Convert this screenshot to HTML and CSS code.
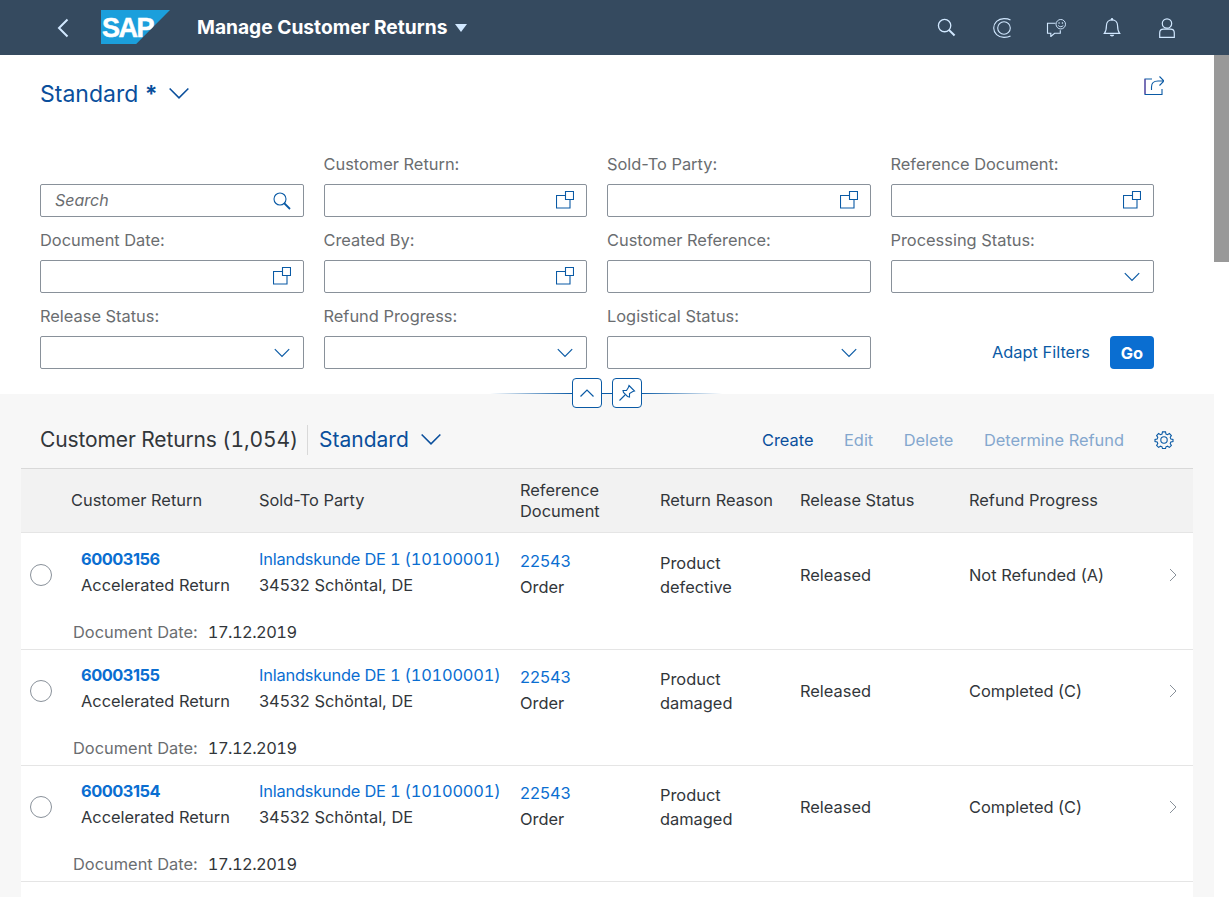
FILE: index.html
```html
<!DOCTYPE html>
<html lang="en">
<head>
<meta charset="utf-8">
<title>Manage Customer Returns</title>
<link rel="stylesheet" href="styles.css">
</head>
<body>
<svg class="defs" width="0" height="0">
  <symbol id="vh" viewBox="0 0 18 18"><path d="M9 4.500H.5V17H14V8.500M9.500 .5H17.500V8.500H9.500Z" fill="none" stroke="currentColor" stroke-width="1.100"/></symbol>
  <symbol id="chev" viewBox="0 0 16 10"><path d="M.8 1.200L8 8.400L15.200 1.200" fill="none" stroke="currentColor" stroke-width="1.200"/></symbol>
</svg>
<header class="shell">
  <svg class="back" width="12" height="20" viewBox="0 0 12 20"><path d="M10.500 1.500L2 10L10.500 18.500" fill="none" stroke="#d1e8ff" stroke-width="2"/></svg>
  <div class="logo"><span class="logo-text">SAP</span></div>
  <div class="app-title">Manage Customer Returns</div>
  <span class="title-caret"></span>
  <div class="shell-icons">
    <svg width="19" height="19" viewBox="0 0 20 20"><circle cx="8" cy="8" r="6.500" fill="none" stroke="#d1e8ff" stroke-width="1.400"/><path d="M12.500 12.500L18.500 18.500" stroke="#d1e8ff" stroke-width="2.200"/></svg>
    <svg width="18" height="20" viewBox="0 0 18 20"><path d="M17.500 2C15.800 1 14 .6 11 .6C5 .6 .7 4.800 .7 10C.7 15.200 5 19.400 11 19.400C14 19.400 15.800 19 17.500 18" fill="none" stroke="#d1e8ff" stroke-width="1.100"/><circle cx="11" cy="10" r="6.300" fill="none" stroke="#d1e8ff" stroke-width="1.100"/></svg>
    <svg width="21" height="18" viewBox="0 0 22 19"><path d="M10 4.500H1.500V15H5V18.500L9 15H15V12" fill="none" stroke="#d1e8ff" stroke-width="1.200"/><circle cx="15.500" cy="5.500" r="5" fill="#354a5f" stroke="#d1e8ff" stroke-width="1"/><circle cx="13.700" cy="4.200" r=".8" fill="#d1e8ff"/><circle cx="17.300" cy="4.200" r=".8" fill="#d1e8ff"/><path d="M12.800 6.800C14 8.600 17 8.600 18.200 6.800" fill="none" stroke="#d1e8ff"/></svg>
    <svg width="18" height="21" viewBox="0 0 20 22"><path d="M1.500 17.500C3.200 15.500 3.800 14 3.800 9C3.800 5 6.500 2.500 10 2.500C13.500 2.500 16.200 5 16.200 9C16.200 14 16.800 15.500 18.500 17.500Z" fill="none" stroke="#d1e8ff" stroke-width="1.300"/><circle cx="10" cy="1.800" r="1.300" fill="#d1e8ff"/><path d="M7.500 19H12.500C12 21.500 8 21.500 7.500 19Z" fill="#d1e8ff"/></svg>
    <svg width="16" height="20" viewBox="0 0 16 20"><circle cx="8" cy="5.500" r="4.700" fill="none" stroke="#d1e8ff" stroke-width="1.200"/><path d="M.7 19.400V15C.7 12.500 2 11.200 4.500 11.200H11.500C14 11.200 15.300 12.500 15.300 15V19.400H.7Z" fill="none" stroke="#d1e8ff" stroke-width="1.200"/></svg>
  </div>
</header>
<div class="page">
  <main class="content">
    <section class="filterbar">
      <div class="variant-row">
        <div class="variant-title">Standard <b class="star">*</b></div>
        <svg class="variant-chev"><use href="#chev"/></svg>
        <svg class="share" width="20" height="20" viewBox="0 0 20 20"><path d="M8 4H1V19.500H18V14" fill="none" stroke="#0a5aa5" stroke-width="1.100"/><path d="M1 4V19" stroke="#7a3fa0" stroke-width="1"/><path d="M7.500 15V12C7.500 8 10 6 14 6H19M15.500 1.500L20 6L15.500 10.500" fill="none" stroke="#0a5aa5" stroke-width="1.100"/></svg>
      </div>
      <div class="filter-grid">
        <div class="field"><div class="label"></div><div class="input"><i class="placeholder">Search</i><svg class="ico" width="18" height="18" viewBox="0 0 18 18"><circle cx="7" cy="7" r="6" fill="none" stroke="#0a5aa5" stroke-width="1.100"/><path d="M11 11L17 17" stroke="#0a5aa5" stroke-width="1.800"/></svg></div></div>
        <div class="field"><div class="label">Customer Return:</div><div class="input"><svg class="ico vh"><use href="#vh"/></svg></div></div>
        <div class="field"><div class="label">Sold-To Party:</div><div class="input"><svg class="ico vh"><use href="#vh"/></svg></div></div>
        <div class="field"><div class="label">Reference Document:</div><div class="input"><svg class="ico vh"><use href="#vh"/></svg></div></div>
        <div class="field"><div class="label">Document Date:</div><div class="input"><svg class="ico vh"><use href="#vh"/></svg></div></div>
        <div class="field"><div class="label">Created By:</div><div class="input"><svg class="ico vh"><use href="#vh"/></svg></div></div>
        <div class="field"><div class="label">Customer Reference:</div><div class="input"></div></div>
        <div class="field"><div class="label">Processing Status:</div><div class="input"><svg class="ico dd"><use href="#chev"/></svg></div></div>
        <div class="field"><div class="label">Release Status:</div><div class="input"><svg class="ico dd"><use href="#chev"/></svg></div></div>
        <div class="field"><div class="label">Refund Progress:</div><div class="input"><svg class="ico dd"><use href="#chev"/></svg></div></div>
        <div class="field"><div class="label">Logistical Status:</div><div class="input"><svg class="ico dd"><use href="#chev"/></svg></div></div>
        <div class="actions"><span class="adapt">Adapt Filters</span><span class="go">Go</span></div>
      </div>
      <div class="collapse-bar">
        <span class="hline hline-l"></span>
        <span class="mini"><svg width="16" height="10" viewBox="0 0 16 10"><path d="M1.500 8.500L8 2L14.500 8.500" fill="none" stroke="#0a5aa5" stroke-width="1.200"/></svg></span>
        <span class="hline hline-m"></span>
        <span class="mini"><svg width="18" height="18" viewBox="0 0 18 18"><path d="M11 1.500L16.500 7L14.800 7.500L11.500 9.500L11.500 13L9.500 12.500L5.500 8.500L5 6.500L8.500 6.500L10.500 3.200Z M7 11L1.500 16.500" fill="none" stroke="#0a5aa5" stroke-width="1.100"/></svg></span>
        <span class="hline hline-r"></span>
      </div>
    </section>
    <section class="results">
      <div class="toolbar">
        <div class="count">Customer Returns (1,054)</div>
        <div class="sep"></div>
        <div class="tvariant">Standard</div>
        <svg class="tchev"><use href="#chev"/></svg>
        <div class="tactions">
          <span class="act">Create</span>
          <span class="act off">Edit</span>
          <span class="act off">Delete</span>
          <span class="act off">Determine Refund</span>
          <svg class="gear" width="20" height="20" viewBox="0 0 20 20"><circle cx="10" cy="10" r="3.200" fill="none" stroke="#0a5aa5" stroke-width="1.100"/><path d="M8.300 1H11.700L12.200 3.400L13.900 4.100L16 2.800L18.200 5L16.900 7.100L17.600 8.800L20 9.300V11.700L17.600 12.200L16.900 13.900L18.200 16L16 18.200L13.900 16.900L12.200 17.600L11.700 19.500H8.300L7.800 17.600L6.100 16.900L4 18.200L1.800 16L3.100 13.900L2.400 12.200L0 11.700V9.300L2.400 8.800L3.100 7.100L1.800 5L4 2.800L6.100 4.100L7.800 3.400Z" transform="translate(1 1) scale(.9)" fill="none" stroke="#0a5aa5" stroke-width="1.200"/></svg>
        </div>
      </div>
      <div class="table">
        <div class="thead">
          <div></div>
          <div>Customer Return</div>
          <div>Sold-To Party</div>
          <div class="h2">Reference<br>Document</div>
          <div>Return Reason</div>
          <div>Release Status</div>
          <div>Refund Progress</div>
        </div>
        <div class="rows">
        <div class="row">
          <div class="cells">
            <span class="radio"></span>
            <div class="c-id"><a class="id">60003156</a><span>Accelerated Return</span></div>
            <div class="c-party"><a class="link party">Inlandskunde DE 1 (10100001)</a><span>34532 Schöntal, DE</span></div>
            <div class="c-ref"><a class="link">22543</a><span>Order</span></div>
            <div class="c-reason">Product<br>defective</div>
            <div>Released</div>
            <div>Not Refunded (A)</div>
            <svg class="nav" width="8" height="14" viewBox="0 0 8 14"><path d="M1 1L7 7L1 13" fill="none" stroke="#89919a" stroke-width="1"/></svg>
          </div>
          <div class="popin"><span class="pl">Document Date:</span><span class="date">17.12.2019</span></div>
        </div>
        <div class="row">
          <div class="cells">
            <span class="radio"></span>
            <div class="c-id"><a class="id">60003155</a><span>Accelerated Return</span></div>
            <div class="c-party"><a class="link party">Inlandskunde DE 1 (10100001)</a><span>34532 Schöntal, DE</span></div>
            <div class="c-ref"><a class="link">22543</a><span>Order</span></div>
            <div class="c-reason">Product<br>damaged</div>
            <div>Released</div>
            <div>Completed (C)</div>
            <svg class="nav" width="8" height="14" viewBox="0 0 8 14"><path d="M1 1L7 7L1 13" fill="none" stroke="#89919a" stroke-width="1"/></svg>
          </div>
          <div class="popin"><span class="pl">Document Date:</span><span class="date">17.12.2019</span></div>
        </div>
        <div class="row">
          <div class="cells">
            <span class="radio"></span>
            <div class="c-id"><a class="id">60003154</a><span>Accelerated Return</span></div>
            <div class="c-party"><a class="link party">Inlandskunde DE 1 (10100001)</a><span>34532 Schöntal, DE</span></div>
            <div class="c-ref"><a class="link">22543</a><span>Order</span></div>
            <div class="c-reason">Product<br>damaged</div>
            <div>Released</div>
            <div>Completed (C)</div>
            <svg class="nav" width="8" height="14" viewBox="0 0 8 14"><path d="M1 1L7 7L1 13" fill="none" stroke="#89919a" stroke-width="1"/></svg>
          </div>
          <div class="popin"><span class="pl">Document Date:</span><span class="date">17.12.2019</span></div>
        </div>
        </div>
        <div class="row-empty"></div>
      </div>
    </section>
  </main>
  <div class="scrollbar"><div class="thumb"></div></div>
</div>
</body>
</html>
```
FILE: styles.css
```css
* { box-sizing: border-box; }
html, body { margin: 0; height: 100%; overflow: hidden; }
body { font-family: "Inter", "Liberation Sans", sans-serif; font-size: 16.4px; color: #32363a; background: #fff; }
.defs { display: block; height: 0; }
a { text-decoration: none; }

.shell { height: 55px; background: #354a5f; display: flex; align-items: center; padding-left: 57px; color: #fff; }
.back { margin-right: 32px; }
.logo { width: 69px; height: 34px; margin-top: -1px; background: #1b9fdc; clip-path: polygon(0 0, 100% 0, 51% 100%, 0 100%); display: flex; align-items: center; }
.logo-text { font: 700 27px/34px "Liberation Sans", sans-serif; color: #fff; letter-spacing: -1.500px; margin-left: 1px; margin-top: 2px; -webkit-text-stroke: .5px #fff; }
.app-title { margin-left: 27px; padding-bottom: 1px; font-weight: 700; font-size: 19.200px; color: #fff; white-space: nowrap; }
.title-caret { margin-left: 8px; width: 0; height: 0; border-left: 6.500px solid transparent; border-right: 6.500px solid transparent; border-top: 8px solid #d1e8ff; }
.shell-icons { margin-left: auto; margin-right: 35px; display: grid; grid-auto-flow: column; grid-auto-columns: 55px; justify-items: center; align-items: center; }

.page { display: flex; height: calc(100% - 55px); }
.content { flex: 1; min-width: 0; }
.scrollbar { width: 15px; background: #fff; }
.thumb { height: 207px; background: #999; }

.filterbar { position: relative; height: 339px; padding: 0 60px 0 40px; background: #fff; }
.variant-row { display: flex; align-items: center; height: 86px; padding-bottom: 9px; position: relative; }
.variant-title { font-size: 23px; color: #0a4f9c; line-height: 77px; white-space: pre; margin-top: 2px; }
.star { font-weight: 700; }
.variant-chev { width: 22px; height: 13px; margin-left: 10px; color: #0a4f9c; }
.share { position: absolute; right: -10px; top: 20px; }
.filter-grid { display: grid; grid-template-columns: repeat(4, 1fr); column-gap: 20px; }
.field { height: 76px; padding-top: 12px; }
.label { height: 31px; line-height: 22px; color: #6a6d70; }
.input { height: 33px; border: 1px solid #89919a; border-radius: 2px; display: flex; align-items: center; justify-content: flex-end; padding: 0 12px 0 14px; background: #fff; }
.placeholder { margin-right: auto; color: #6a6d70; font-size: 16px; padding-bottom: 2px; }
.ico { flex: none; color: #0a5aa5; }
.ico.vh { width: 18px; height: 18px; margin-top: -1px; }
.ico.dd { width: 16px; height: 10px; margin-right: 1px; }
.actions { display: flex; align-items: flex-end; justify-content: flex-end; gap: 20px; height: 76px; }
.adapt { color: #0a5aa5; line-height: 33px; }
.go { width: 44px; height: 33px; border-radius: 4px; background: #0a6ed1; color: #fff; font-weight: 700; display: flex; align-items: center; justify-content: center; }

.collapse-bar { position: absolute; left: 490px; top: 323px; display: flex; align-items: center; width: 240px; height: 30px; }
.mini { width: 30px; height: 30px; border: 1px solid #0a5aa5; border-radius: 4px; background: #fff; display: flex; align-items: center; justify-content: center; flex: none; }
.hline { height: 1px; }
.hline-l { width: 82px; background: linear-gradient(to right, transparent, #0a5aa5); }
.hline-m { width: 10px; background: #0a5aa5; }
.hline-r { width: 80px; background: linear-gradient(to right, #0a5aa5, transparent); }

.results { height: 503px; background: #f7f7f7; padding-left: 21px; padding-right: 21px; }
.toolbar { height: 74px; display: flex; align-items: center; margin-left: 19px; padding-top: 17px; padding-right: 19px; }
.count { font-size: 21px; font-variant-numeric: tabular-nums; letter-spacing: -.12px; color: #32363a; white-space: nowrap; }
.sep { width: 1px; height: 30px; background: #d9d9d9; margin: 0 11px 0 9px; }
.tvariant { font-size: 21px; color: #0a4f9c; }
.tchev { width: 22px; height: 13px; margin-left: 11px; color: #0a4f9c; }
.tactions { margin-left: auto; display: flex; align-items: center; gap: 30.500px; }
.act { color: #0a4f9c; }
.act.off { color: #84a7ce; }
.gear { margin-left: -.5px; }

.table { background: #fff; border-top: 1px solid #d9d9d9; }
.thead, .cells { display: grid; grid-template-columns: 50px 188px 261px 140px 140px 169px 1fr; align-items: center; }
.thead { height: 64px; background: #f2f2f2; border-bottom: 1px solid #e5e5e5; color: #32363a; padding-bottom: 2px; }
.h2 { line-height: 21px; margin-top: 2px; }
.rows { padding-top: 1px; }
.row { height: 116px; border-bottom: 1px solid #e5e5e5; }
.cells { height: 82px; position: relative; }
.radio { width: 22px; height: 22px; border: 1px solid #89919a; border-radius: 50%; background: #fff; margin-left: 9px; }
.c-id, .c-party, .c-ref { display: flex; flex-direction: column; line-height: 26px; white-space: nowrap; }
.c-id { padding-left: 10px; padding-bottom: 6px; }
.c-party { padding-bottom: 6px; }
.c-ref { padding-bottom: 2px; }
.c-reason { line-height: 24px; }
.id { font-weight: 700; color: #0a6ed1; letter-spacing: -.5px; }
.link { color: #0a6ed1; }
.party { font-variant-numeric: tabular-nums; letter-spacing: -.2px; }
.nav { position: absolute; left: 1148px; top: 34px; }
.popin { height: 33px; padding: 0 0 2px 52px; display: flex; align-items: center; gap: 10px; }
.pl { color: #6a6d70; }
.date { font-variant-numeric: tabular-nums; letter-spacing: -.5px; }
.row-empty { height: 20px; }
```
